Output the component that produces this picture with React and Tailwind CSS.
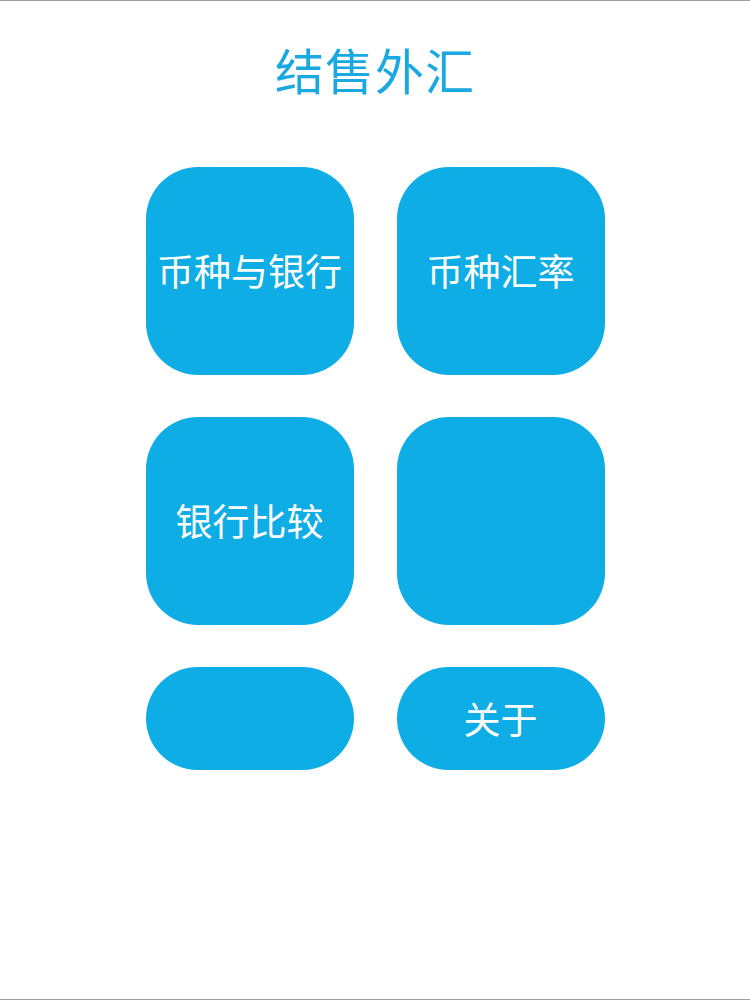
export default function App() {
  const font = { fontFamily: '"Noto Sans CJK SC", "Noto Sans", sans-serif' };

  return (
    <div
      className="w-[750px] h-[1000px] bg-white border-y border-[#a0a0a0] flex flex-col items-center"
      style={font}
    >
      <h1 className="mt-[38px] text-[49px] leading-[60px] text-[#1aa8e0] font-normal tracking-[1px]">
        结售外汇
      </h1>

      <div className="mt-[68px] grid grid-cols-[208px_208px] gap-x-[43px] gap-y-[42px]">
        <button className="h-[208px] rounded-[52px] bg-[#0fade6] text-white text-[37px] flex items-center justify-center">
          币种与银行
        </button>
        <button className="h-[208px] rounded-[52px] bg-[#0fade6] text-white text-[37px] flex items-center justify-center">
          币种汇率
        </button>
        <button className="h-[208px] rounded-[52px] bg-[#0fade6] text-white text-[37px] flex items-center justify-center">
          银行比较
        </button>
        <button className="h-[208px] rounded-[52px] bg-[#0fade6] text-white text-[37px] flex items-center justify-center"></button>
        <button className="h-[103px] rounded-full bg-[#0fade6] text-white text-[37px] flex items-center justify-center"></button>
        <button className="h-[103px] rounded-full bg-[#0fade6] text-white text-[37px] flex items-center justify-center">
          关于
        </button>
      </div>
    </div>
  );
}
